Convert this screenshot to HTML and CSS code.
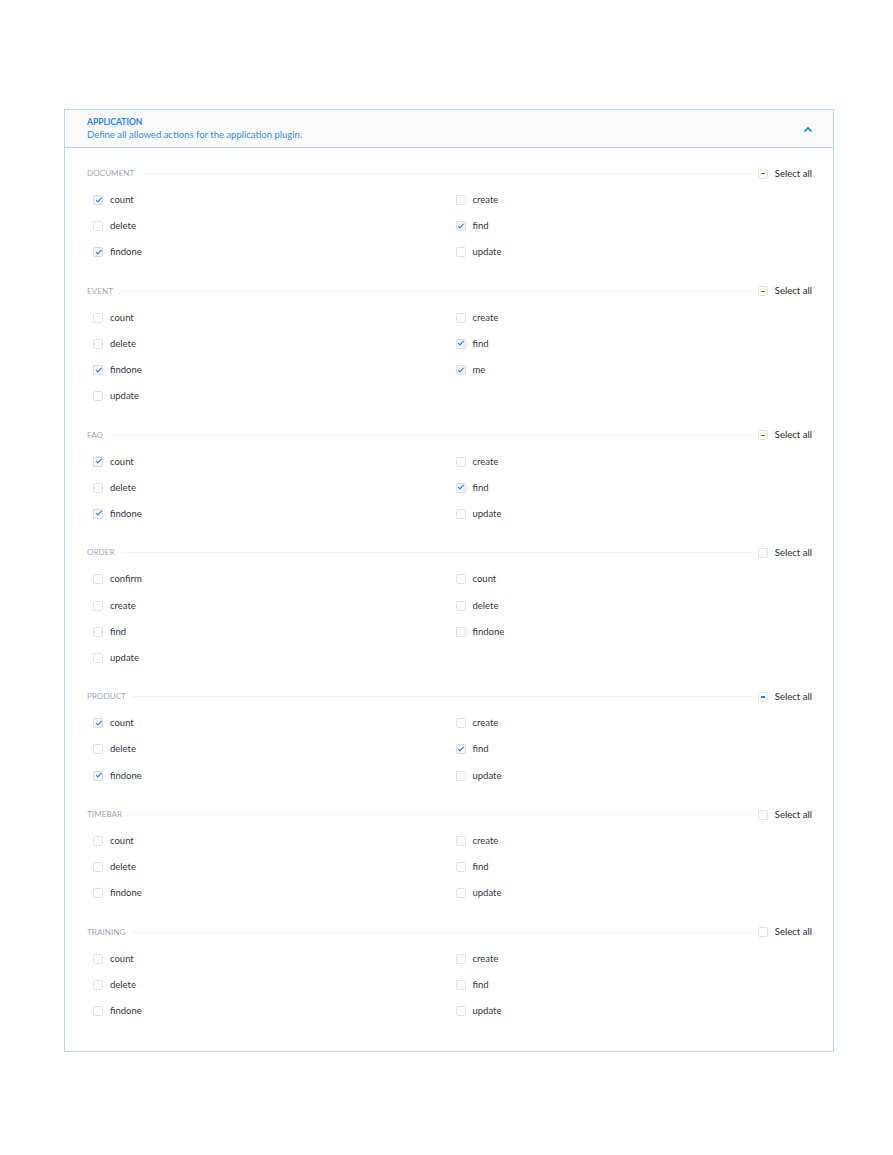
FILE: index.html
```html
<!DOCTYPE html>
<html>
<head>
<meta charset="utf-8">
<link rel="stylesheet" href="styles.css">
</head>
<body>
<div class="panel">
  <div class="panel-head">
    <div class="head-text">
      <div class="head-title">Application</div>
      <div class="head-sub">Define all allowed actions for the application plugin.</div>
    </div>
    <svg class="chevron" width="10" height="7" viewBox="0 0 10 7"><path d="M1.5 5.5 L5 2 L8.5 5.5" fill="none" stroke="#007eff" stroke-width="1.6"/></svg>
  </div>
  <div class="panel-body">

    <section class="group">
      <div class="group-head"><span class="group-title">Document</span><span class="rule"></span><label class="select-all"><span class="cb cb-mixed"></span>Select all</label></div>
      <div class="grid">
        <label class="item"><span class="cb cb-on"></span>count</label>
        <label class="item"><span class="cb"></span>create</label>
        <label class="item"><span class="cb"></span>delete</label>
        <label class="item"><span class="cb cb-on"></span>find</label>
        <label class="item"><span class="cb cb-on"></span>findone</label>
        <label class="item"><span class="cb"></span>update</label>
      </div>
    </section>

    <section class="group">
      <div class="group-head"><span class="group-title">Event</span><span class="rule"></span><label class="select-all"><span class="cb cb-mixed"></span>Select all</label></div>
      <div class="grid">
        <label class="item"><span class="cb"></span>count</label>
        <label class="item"><span class="cb"></span>create</label>
        <label class="item"><span class="cb"></span>delete</label>
        <label class="item"><span class="cb cb-on"></span>find</label>
        <label class="item"><span class="cb cb-on"></span>findone</label>
        <label class="item"><span class="cb cb-on"></span>me</label>
        <label class="item"><span class="cb"></span>update</label>
      </div>
    </section>

    <section class="group">
      <div class="group-head"><span class="group-title">Faq</span><span class="rule"></span><label class="select-all"><span class="cb cb-mixed"></span>Select all</label></div>
      <div class="grid">
        <label class="item"><span class="cb cb-on"></span>count</label>
        <label class="item"><span class="cb"></span>create</label>
        <label class="item"><span class="cb"></span>delete</label>
        <label class="item"><span class="cb cb-on"></span>find</label>
        <label class="item"><span class="cb cb-on"></span>findone</label>
        <label class="item"><span class="cb"></span>update</label>
      </div>
    </section>

    <section class="group">
      <div class="group-head"><span class="group-title">Order</span><span class="rule"></span><label class="select-all"><span class="cb"></span>Select all</label></div>
      <div class="grid">
        <label class="item"><span class="cb"></span>confirm</label>
        <label class="item"><span class="cb"></span>count</label>
        <label class="item"><span class="cb"></span>create</label>
        <label class="item"><span class="cb"></span>delete</label>
        <label class="item"><span class="cb"></span>find</label>
        <label class="item"><span class="cb"></span>findone</label>
        <label class="item"><span class="cb"></span>update</label>
      </div>
    </section>

    <section class="group">
      <div class="group-head"><span class="group-title">Product</span><span class="rule"></span><label class="select-all"><span class="cb cb-mixed"></span>Select all</label></div>
      <div class="grid">
        <label class="item"><span class="cb cb-on"></span>count</label>
        <label class="item"><span class="cb"></span>create</label>
        <label class="item"><span class="cb"></span>delete</label>
        <label class="item"><span class="cb cb-on"></span>find</label>
        <label class="item"><span class="cb cb-on"></span>findone</label>
        <label class="item"><span class="cb"></span>update</label>
      </div>
    </section>

    <section class="group">
      <div class="group-head"><span class="group-title">Timebar</span><span class="rule"></span><label class="select-all"><span class="cb"></span>Select all</label></div>
      <div class="grid">
        <label class="item"><span class="cb"></span>count</label>
        <label class="item"><span class="cb"></span>create</label>
        <label class="item"><span class="cb"></span>delete</label>
        <label class="item"><span class="cb"></span>find</label>
        <label class="item"><span class="cb"></span>findone</label>
        <label class="item"><span class="cb"></span>update</label>
      </div>
    </section>

    <section class="group">
      <div class="group-head"><span class="group-title">Training</span><span class="rule"></span><label class="select-all"><span class="cb"></span>Select all</label></div>
      <div class="grid">
        <label class="item"><span class="cb"></span>count</label>
        <label class="item"><span class="cb"></span>create</label>
        <label class="item"><span class="cb"></span>delete</label>
        <label class="item"><span class="cb"></span>find</label>
        <label class="item"><span class="cb"></span>findone</label>
        <label class="item"><span class="cb"></span>update</label>
      </div>
    </section>

  </div>
</div>
</body>
</html>
```

FILE: styles.css
```css
html, body {
  margin: 0;
  padding: 0;
  background: #ffffff;
  font-family: Lato, "Noto Sans", sans-serif;
}

body {
  padding: 109px 59px 0 64px;
}

.panel {
  width: 770px;
  box-sizing: border-box;
  border: 1px solid #b6d6f7;
  padding-bottom: 20px;
}

.panel-head {
  display: flex;
  align-items: center;
  justify-content: space-between;
  height: 38px;
  box-sizing: border-box;
  padding: 0 20px 1px 22px;
  background: #fafafb;
  border-bottom: 1px solid #b6d6f7;
}

.head-title {
  font-size: 8.5px;
  font-weight: 700;
  text-transform: uppercase;
  color: #1c86f2;
  line-height: 12px;
}

.head-sub {
  font-size: 9.5px;
  color: #2e8ff0;
  line-height: 13px;
}

.chevron {
  display: block;
  margin-top: 3px;
}

.panel-body {
  padding: 19px 21px 0 22px;
}

.group + .group {
  margin-top: 13px;
}

.group-head {
  display: flex;
  align-items: center;
  height: 12px;
}

.group-title {
  font-size: 8px;
  text-transform: uppercase;
  color: #9ea7b8;
  letter-spacing: 0.1px;
}

.rule {
  flex: 1;
  height: 1px;
  background: #f1f3f6;
  margin: 1px 6px 0 6px;
}

.select-all {
  display: flex;
  align-items: center;
  font-size: 9.5px;
  color: #333740;
  font-weight: 500;
}

.select-all .cb {
  margin-right: 7px;
}

.grid {
  display: grid;
  grid-template-columns: 1fr 1fr;
  grid-auto-rows: 26.1px;
  padding-top: 14.5px;
}

.item {
  display: flex;
  align-items: center;
  height: 12px;
  padding-left: 6px;
  font-size: 9.5px;
  color: #333740;
}

.cb {
  position: relative;
  width: 10px;
  height: 10px;
  box-sizing: border-box;
  border: 1px solid #dfe3e9;
  border-radius: 2px;
  background: #fff;
  margin-right: 7px;
  flex: none;
  margin-top: 1px;
}

.cb-on {
  background: #f4f8fd;
  border-color: #d6dde8;
}

.cb-on::after {
  content: "";
  position: absolute;
  left: 1.8px;
  top: 1.6px;
  width: 4.5px;
  height: 2.2px;
  border-left: 1.3px solid #1c7fe6;
  border-bottom: 1.3px solid #1c7fe6;
  transform: rotate(-45deg);
  transform-origin: center;
}

.cb-mixed::after {
  content: "";
  position: absolute;
  left: 2px;
  right: 2px;
  top: 3.5px;
  height: 1.3px;
  background: #1c7fe6;
}
```
